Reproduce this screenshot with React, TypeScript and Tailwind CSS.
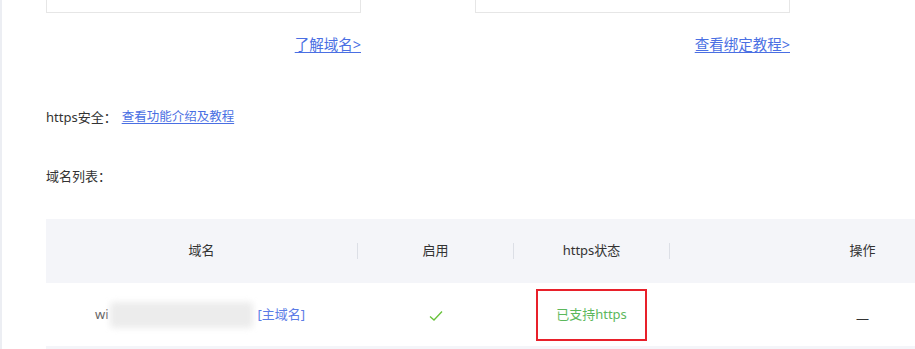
import React from "react";

const font = { fontFamily: '"Noto Sans", "Noto Sans CJK SC", sans-serif' };

export default function App() {
  return (
    <div className="flex w-[915px] h-[349px] overflow-hidden bg-white" style={font}>
      <div className="w-[2px] shrink-0 bg-[#eceef3]" />
      <div className="flex flex-col pl-[44px] shrink-0 w-[1100px]">
        {/* cards */}
        <div className="flex gap-[114px]">
          <div className="flex flex-col w-[315px]">
            <div className="h-[13px] border-x border-b border-[#e6e6e6]" />
            <div className="mt-[21px] flex justify-end">
              <a className="text-[14.5px] leading-[20px] text-[#4a6fe3] underline underline-offset-2">了解域名&gt;</a>
            </div>
          </div>
          <div className="flex flex-col w-[315px]">
            <div className="h-[13px] border-x border-b border-[#e6e6e6]" />
            <div className="mt-[21px] flex justify-end">
              <a className="text-[14.5px] leading-[20px] text-[#4a6fe3] underline underline-offset-2">查看绑定教程&gt;</a>
            </div>
          </div>
        </div>

        <div className="mt-[53px] flex items-center text-[13px] leading-[20px] text-[#333]">
          <span>https安全：</span>
          <a className="ml-[5px] text-[12.5px] text-[#4a6fe3] underline underline-offset-2">查看功能介绍及教程</a>
        </div>

        <div className="mt-[39px] text-[13px] leading-[20px] text-[#333]">域名列表：</div>

        <div className="mt-[33px] w-[1009px] flex flex-col text-[13px]">
          <div className="flex h-[64px] items-center bg-[#f4f5f9] text-[#333]">
            <div className="w-[311px] text-center">域名</div>
            <div className="w-px h-[16px] bg-[#dcdfe6]" />
            <div className="w-[155px] text-center">启用</div>
            <div className="w-px h-[16px] bg-[#dcdfe6]" />
            <div className="w-[155px] text-center">https状态</div>
            <div className="w-px h-[16px] bg-[#dcdfe6]" />
            <div className="flex-1 text-center">操作</div>
          </div>
          <div className="flex h-[63px] items-center">
            <div className="w-[311px] flex items-center pl-[49px]">
              <span className="text-[#666]">wi</span>
              <div className="ml-[1px] w-[143px] h-[26px] bg-[#ececec] blur-[3px] rounded-sm" />
              <span className="ml-[5px] text-[#5b7ce6]">[主域名]</span>
            </div>
            <div className="w-px" />
            <div className="w-[155px] flex justify-center pt-[2px]">
              <svg width="14" height="12" viewBox="0 0 14 12" fill="none">
                <path d="M1 6.5 L5 10 L13 1.5" stroke="#67c23a" strokeWidth="1.3" />
              </svg>
            </div>
            <div className="w-px" />
            <div className="w-[155px] flex justify-center">
              <div className="w-[111px] h-[52px] border-2 border-[#e8202a] flex items-center justify-center text-[#5cb85c]">
                已支持https
              </div>
            </div>
            <div className="w-px" />
            <div className="flex-1 flex justify-center pt-[8px] text-[#333]">—</div>
          </div>
          <div className="h-[10px] bg-[#f4f5f9]" />
        </div>
      </div>
    </div>
  );
}
